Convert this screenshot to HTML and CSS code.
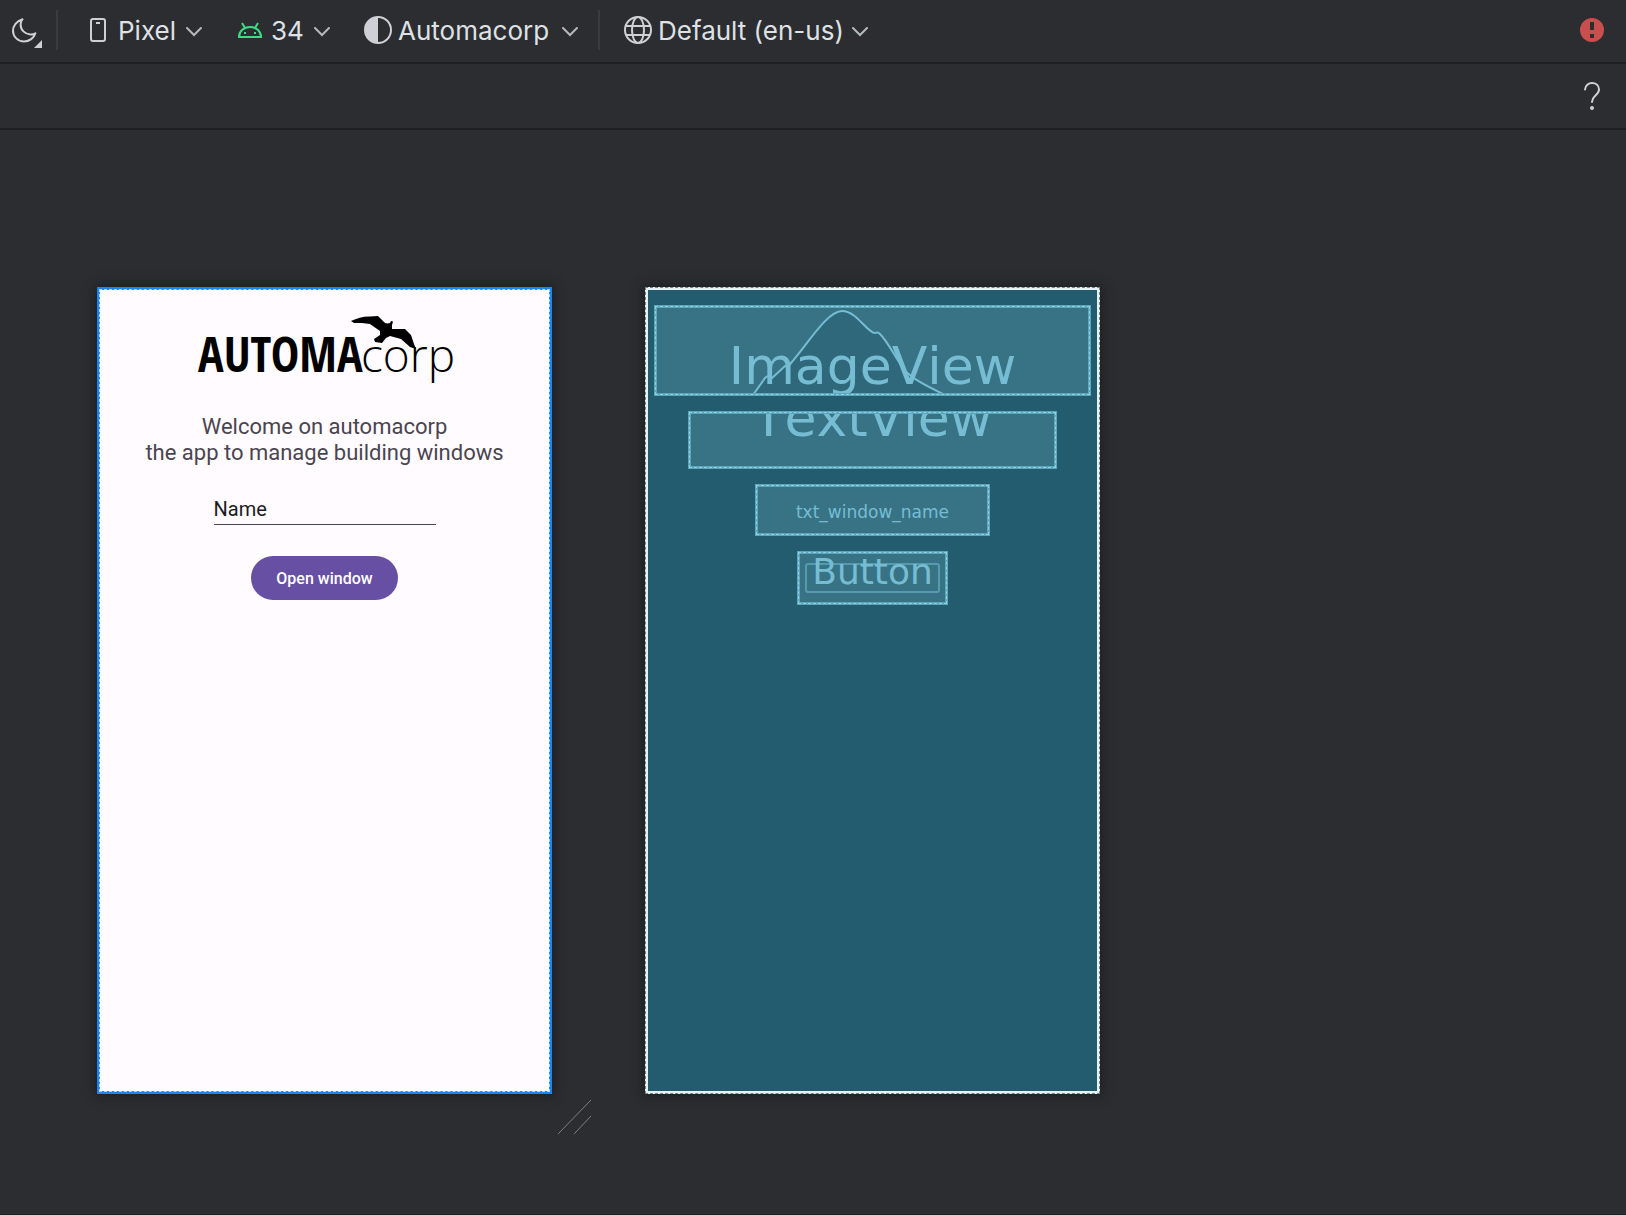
FILE: index.html
```html
<!DOCTYPE html>
<html lang="en">
<head>
<meta charset="utf-8">
<title>Layout editor</title>
<link rel="stylesheet" href="styles.css">
</head>
<body>
<header class="toolbar">
  <button class="icon-button night" aria-label="Night mode">
    <svg width="30" height="32" viewBox="0 0 30 32" fill="none"><path d="M10.500 3.200C4.500 5 1 9.800 1 14.700C1 20.800 6 25.500 12 25.500C17.500 25.500 22 22 23.400 17.300C22 18.200 20 18.600 18.300 18.500C12.800 18.100 8.600 14 8.600 8.500C8.600 6.600 9.300 4.700 10.500 3.200Z" stroke="#ced0d6" stroke-width="2" stroke-linejoin="round"/><path d="M30 24V32H22Z" fill="#ced0d6"/></svg>
  </button>
  <span class="separator"></span>
  <label class="picker device">
    <svg width="16" height="24" viewBox="0 0 16 24" fill="none" stroke="#ced0d6" stroke-width="2"><rect x="1" y="1" width="14" height="22" rx="2"/><path d="M6 5H10"/></svg>
    <select aria-label="Device"><option>Pixel</option></select>
    <svg class="chevron" width="16" height="10" viewBox="0 0 16 10" fill="none"><path d="M1 1L8 8L15 1" stroke="#b4b8bf" stroke-width="2" stroke-linecap="round"/></svg>
  </label>
  <label class="picker api">
    <svg width="24" height="16" viewBox="0 0 24 16" fill="none" stroke="#3ddc84" stroke-width="2"><path d="M1 15C1 9 6 5 12 5S23 9 23 15Z"/><path d="M4 1L7 6M20 1L17 6"/><path d="M6 11H8M16 11H18"/></svg>
    <select aria-label="API level"><option>34</option></select>
    <svg class="chevron" width="16" height="10" viewBox="0 0 16 10" fill="none"><path d="M1 1L8 8L15 1" stroke="#b4b8bf" stroke-width="2" stroke-linecap="round"/></svg>
  </label>
  <label class="picker theme">
    <svg width="28" height="28" viewBox="0 0 28 28" fill="none"><circle cx="14" cy="14" r="13" stroke="#ced0d6" stroke-width="2"/><path d="M14 1A13 13 0 0 0 14 27Z" fill="#ced0d6"/></svg>
    <select aria-label="Theme"><option>Automacorp</option></select>
    <svg class="chevron" width="16" height="10" viewBox="0 0 16 10" fill="none"><path d="M1 1L8 8L15 1" stroke="#b4b8bf" stroke-width="2" stroke-linecap="round"/></svg>
  </label>
  <span class="separator"></span>
  <label class="picker locale">
    <svg width="28" height="28" viewBox="0 0 28 28" fill="none" stroke="#ced0d6" stroke-width="2"><circle cx="14" cy="14" r="13"/><ellipse cx="14" cy="14" rx="6" ry="13"/><path d="M2 10H26M2 19H26"/></svg>
    <select aria-label="Locale"><option>Default (en-us)</option></select>
    <svg class="chevron" width="16" height="10" viewBox="0 0 16 10" fill="none"><path d="M1 1L8 8L15 1" stroke="#b4b8bf" stroke-width="2" stroke-linecap="round"/></svg>
  </label>
  <button class="icon-button end" aria-label="Show issues">
    <svg width="24" height="24" viewBox="0 0 24 24"><circle cx="12" cy="12" r="12" fill="#c94f4f"/><path d="M10 4H14V12H10ZM10 16H14V20H10Z" fill="#2b2d30"/></svg>
  </button>
</header>
<div class="toolbar secondary">
  <button class="icon-button end" aria-label="Help">
    <svg width="24" height="28" viewBox="0 0 24 28" fill="none"><path d="M5 7.500C5.300 3.500 8.500 1 12 1C16 1 19 3.500 19 7.500C19 10.500 17 12 15 14C12.800 16 12 17 12 20" stroke="#ced0d6" stroke-width="2" stroke-linecap="round"/><circle cx="12" cy="26" r="2" fill="#ced0d6"/></svg>
  </button>
</div>
<main class="canvas">
  <section class="surface design">
    <svg class="logo" width="262" height="80" viewBox="0 0 262 80" role="img" aria-label="AUTOMAcorp">
      <text class="logo-bold" x="4" y="63">AUTOMA</text>
      <text class="logo-light" x="167" y="63">corp</text>
      <path d="M157 12C163 9 171 7 176 7.500L184 7L190 13C192 15 194 14.500 196 14L197 12L199 12.500L198 16L198 20L211 20L217 26L220 35L222 40L216 38L207 30L196 27L192 29L188 34L181 33L180 30L186 26L186 22L176 15L168 14L160 14Z"/>
    </svg>
    <p class="welcome">Welcome on automacorp<br>the app to manage building windows</p>
    <input class="name" type="text" value="Name" aria-label="Window name">
    <button class="open">Open window</button>
    <svg class="resize" width="36" height="36" viewBox="0 0 36 36" fill="none" stroke="#7d7f82"><path d="M1 35L34 1M17 35L34 17"/></svg>
  </section>
  <section class="surface blueprint">
    <div class="box image"><svg class="peak" width="192" height="84" viewBox="0 0 192 84"><path d="M0 84L12 67Q16 63 18 68L32 55Q36 56 38 52C54 34 74 0 89 0C104 0 114 22 122 22C124 22 124 20 127 23C135 31 142 46 150 57C158 68 176 76 192 84" fill="#2f687b" stroke="#76bdd4" stroke-width="2"/></svg><span class="caption">ImageView</span></div>
    <div class="box text"><span class="caption">TextView</span></div>
    <div class="box field"><span>txt_window_name</span></div>
    <div class="box action"><span class="outline"></span><span>Button</span></div>
  </section>
</main>
</body>
</html>
```
FILE: styles.css
```css
* { box-sizing: border-box; }

body {
  margin: 0;
  min-height: 100vh;
  display: flex;
  flex-direction: column;
  background: #2b2d30;
  color: #dfe1e5;
  font-family: Inter, "Liberation Sans", sans-serif;
}

button, select, input { font: inherit; color: inherit; }

.toolbar {
  display: flex;
  align-items: center;
  height: 64px;
  padding: 0 22px 2px 12px;
  border-bottom: 2px solid #1e1f22;
  font-size: 26px;
}

.toolbar.secondary { height: 66px; padding-bottom: 0; }

.icon-button {
  display: flex;
  padding: 0;
  border: 0;
  background: none;
}

.icon-button.end { margin-left: auto; }
.night { margin-right: 14px; padding-top: 4px; }

.separator {
  width: 2px;
  height: 40px;
  background: #393b40;
}

.picker { display: flex; align-items: center; }

.picker select {
  appearance: none;
  padding: 2px 0 0;
  border: 0;
  background: none;
  line-height: 32px;
}

.chevron { margin: 4px 0 0 10px; }
.device { margin: 0 36px 0 32px; }
.device select { margin-left: 12px; }
.api { margin-right: 34px; }
.api select { margin-left: 9px; }
.theme { margin-right: 20px; }
.theme select, .locale select { margin-left: 6px; }
.theme .chevron { margin-left: 12px; }
.locale { margin-left: 24px; }
.locale .chevron { margin-left: 8px; }

.canvas {
  flex: 1;
  display: flex;
  align-items: flex-start;
  gap: 93px;
  padding: 157px 97px 0;
  border-bottom: 1px solid #1e1f22;
}

.surface {
  position: relative;
  display: flex;
  flex-direction: column;
  align-items: center;
  width: 455px;
  height: 807px;
  box-shadow: 0 0 10px 2px #1e1f22;
}

.design {
  border: 3px solid #1886f7;
  background: #fffbff;
  font-family: Roboto, sans-serif;
}

.surface::after {
  content: "";
  position: absolute;
  inset: -1px;
  border: 1px dashed #b4d8fb;
  pointer-events: none;
}

.logo { margin-top: 19px; }
.logo-bold { font: 700 48px "Open Sans Condensed", "Noto Sans Condensed", "Roboto Condensed", "Liberation Sans Narrow", Roboto, sans-serif; }
.logo-light { font: 300 46px "Open Sans", sans-serif; }

.welcome {
  margin: 25px 0 0;
  color: #49454f;
  font-size: 22px;
  line-height: 26px;
  text-align: center;
}

.name {
  width: 222px;
  height: 36px;
  margin-top: 23px;
  padding: 4px 0 0;
  border: 0;
  border-bottom: 1px solid #49454f;
  background: none;
  color: #1c1b1f;
  font-size: 20px;
}

.open {
  width: 147px;
  height: 44px;
  margin-top: 31px;
  border: 0;
  border-radius: 22px;
  background: #6750a4;
  color: #fff;
  font-size: 16px;
  font-weight: 500;
}

.resize {
  position: absolute;
  left: 457px;
  top: 809px;
}

.blueprint {
  gap: 15px;
  padding-top: 15px;
  border: 3px solid #e4f2f3;
  background: #235c6e;
  color: #76bdd4;
  font-family: "DejaVu Sans", sans-serif;
  font-kerning: none;
}

.blueprint::after { inset: -3px; border-color: #74858a; }

.box {
  position: relative;
  display: flex;
  align-items: center;
  justify-content: center;
  overflow: hidden;
  border: 3px solid #5fa6bb;
  outline: 1px dashed #8ad2e8;
  outline-offset: -2px;
  background: #387385;
}

.box span { position: relative; }
.caption { font-size: 52px; line-height: 60px; }
.image { width: 437px; height: 91px; padding-top: 30px; }
.text { width: 369px; height: 58px; padding-bottom: 44px; }
.field { width: 235px; height: 52px; padding-top: 4px; font-size: 17px; }
.action { width: 151px; height: 54px; padding-bottom: 13px; font-size: 36px; }

.peak { position: absolute; left: 96px; top: 3px; overflow: visible; }

.box .outline {
  position: absolute;
  inset: 9px 5px;
  border: 2px solid #559bb0;
  border-radius: 3px;
}
```
